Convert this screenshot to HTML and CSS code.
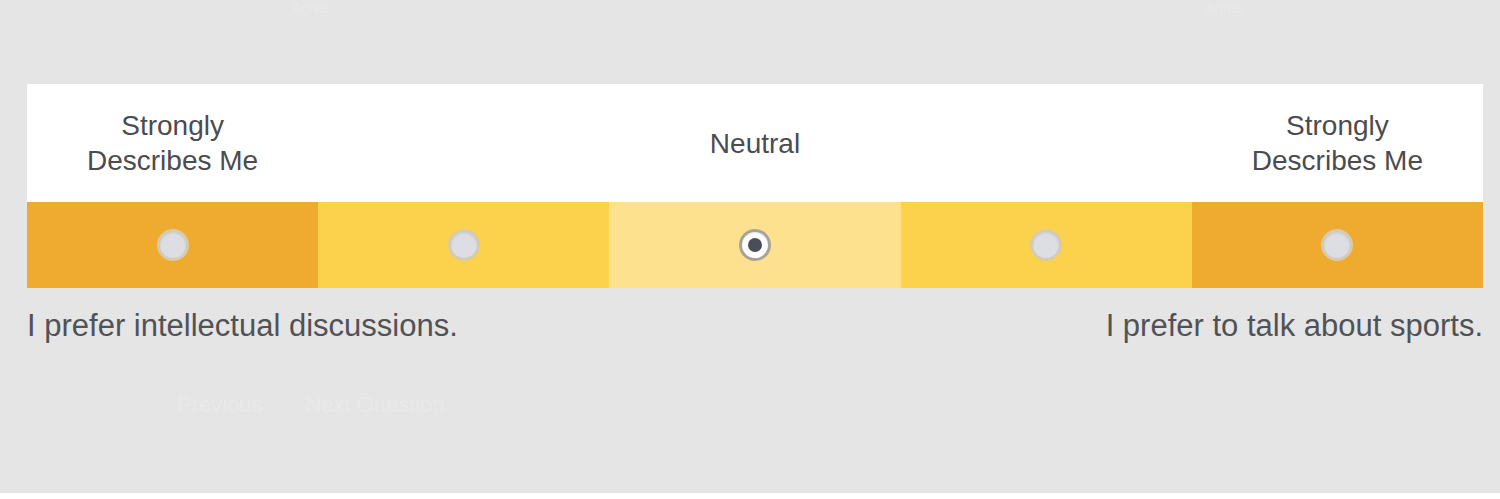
FILE: index.html
```html
<!DOCTYPE html>
<html>
<head>
    <title>Personality Question</title>
    <link rel="stylesheet" href="styles.css">
</head>
<body>
    <div class="page">
        <div class="faint-top">
            <span>Agree</span>
            <span>Agree</span>
        </div>
        <div class="scale">
            <div class="labels">
                <div class="label">Strongly<br>Describes Me</div>
                <div class="label"></div>
                <div class="label">Neutral</div>
                <div class="label"></div>
                <div class="label">Strongly<br>Describes Me</div>
            </div>
            <div class="options">
                <label class="option strong"><input type="radio" name="q1" value="1"><span class="dot"></span></label>
                <label class="option mild"><input type="radio" name="q1" value="2"><span class="dot"></span></label>
                <label class="option neutral"><input type="radio" name="q1" value="3" checked><span class="dot"></span></label>
                <label class="option mild"><input type="radio" name="q1" value="4"><span class="dot"></span></label>
                <label class="option strong"><input type="radio" name="q1" value="5"><span class="dot"></span></label>
            </div>
        </div>
        <div class="statements">
            <span>I prefer intellectual discussions.</span>
            <span>I prefer to talk about sports.</span>
        </div>
        <div class="faint-bottom">Previous &nbsp;&nbsp;&nbsp;&nbsp;&nbsp; Next Question</div>
    </div>
    <div class="footer-line"></div>
</body>
</html>
```

FILE: styles.css
```css
body {
    font-family: "Liberation Sans", Arial, sans-serif;
    margin: 0;
    padding: 0;
    height: 499px;
    background: #e5e5e5;
    color: #4a4c50;
    overflow: hidden;
    display: flex;
    flex-direction: column;
}

.page {
    flex: 1;
    padding: 0 17px 0 27px;
}

.faint-top {
    height: 84px;
    display: flex;
    justify-content: space-between;
    padding: 0 240px 0 265px;
    color: #e9e9e9;
    font-size: 14px;
    line-height: 16px;
}

.scale {
    width: 1456px;
}

.labels {
    background: #fff;
    display: grid;
    grid-template-columns: repeat(5, 1fr);
    height: 118px;
    align-items: center;
}

.label {
    text-align: center;
    font-size: 28px;
    line-height: 35px;
    color: #4a4c50;
}

.options {
    display: grid;
    grid-template-columns: repeat(5, 1fr);
    height: 86px;
}

.option {
    display: flex;
    align-items: center;
    justify-content: center;
    cursor: pointer;
}

.option input {
    display: none;
}

.strong {
    background: #eeab30;
}

.mild {
    background: #fcd14c;
}

.neutral {
    background: #fde18e;
}

.dot {
    width: 26px;
    height: 26px;
    border-radius: 50%;
    background: #dcdee3;
    border: 3px solid #d6cbae;
    box-shadow: inset 0 1px 2px rgba(0, 0, 0, 0.1);
    display: flex;
    align-items: center;
    justify-content: center;
}

.option input:checked + .dot {
    background: #fff;
    border-color: #a8a398;
}

.option input:checked + .dot::after {
    content: "";
    width: 14px;
    height: 14px;
    border-radius: 50%;
    background: #4a4e57;
}

.statements {
    width: 1456px;
    display: flex;
    justify-content: space-between;
    font-size: 31px;
    padding-top: 20px;
    color: #505256;
}

.faint-bottom {
    padding: 48px 0 0 150px;
    color: #e9e9e9;
    font-size: 22px;
}

.footer-line {
    height: 6px;
    background: #fff;
}
```
